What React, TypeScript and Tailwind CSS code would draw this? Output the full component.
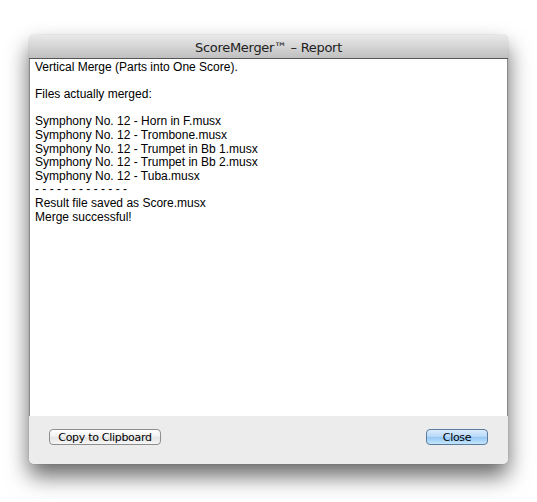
import React from "react";

const lines = [
  "Vertical Merge (Parts into One Score).",
  "",
  "Files actually merged:",
  "",
  "Symphony No. 12 - Horn in F.musx",
  "Symphony No. 12 - Trombone.musx",
  "Symphony No. 12 - Trumpet in Bb 1.musx",
  "Symphony No. 12 - Trumpet in Bb 2.musx",
  "Symphony No. 12 - Tuba.musx",
  "- - - - - - - - - - - - -",
  "Result file saved as Score.musx",
  "Merge successful!",
];

export default function App() {
  return (
    <div className="w-[537px] h-[502px] bg-white pt-[35px] pl-[29px]">
      <div className="w-[479px] h-[429px] flex flex-col rounded-[5px] shadow-[0_12px_22px_rgba(0,0,0,0.6),0_0_1px_rgba(0,0,0,0.4)]">
        <div className="h-[24px] shrink-0 rounded-t-[5px] bg-[linear-gradient(#e9e9e9,#c0c0c0)] border-b border-[#555555] flex items-center justify-center">
          <span className="text-[13px] text-[#222] font-['DejaVu_Sans',sans-serif] tracking-[-0.3px] leading-none pt-[1px]">
            ScoreMerger™ – Report
          </span>
        </div>
        <div className="flex-1 bg-white pl-[5px] pt-[2px] border-l border-[#8a8a8a] border-r border-r-[#8a8a8a] font-['Liberation_Sans',Arial,sans-serif] text-[12px] leading-[13.6px] text-black">
          {lines.map((l, i) => (
            <div key={i} className="h-[13.6px] whitespace-pre">
              {l}
            </div>
          ))}
        </div>
        <div className="h-[48px] shrink-0 bg-[#ececec] rounded-b-[5px] flex items-start justify-between pt-[13px] px-[20px]">
          <button className="h-[16px] w-[112px] rounded-[4px] border border-[#8e8e8e] bg-[linear-gradient(#ffffff,#f0f0f0_50%,#e4e4e4_51%,#f6f6f6)] text-[11px] leading-none text-black font-['DejaVu_Sans',sans-serif] tracking-[-0.3px] flex items-center justify-center">
            Copy to Clipboard
          </button>
          <button className="h-[16px] w-[62px] rounded-[4px] border border-[#5c7a9c] bg-[linear-gradient(#dcecfc,#b4d8f8_50%,#94c6f4_51%,#c4e6fc)] text-[11px] leading-none text-black font-['DejaVu_Sans',sans-serif] tracking-[-0.3px] flex items-center justify-center">
            Close
          </button>
        </div>
      </div>
    </div>
  );
}
